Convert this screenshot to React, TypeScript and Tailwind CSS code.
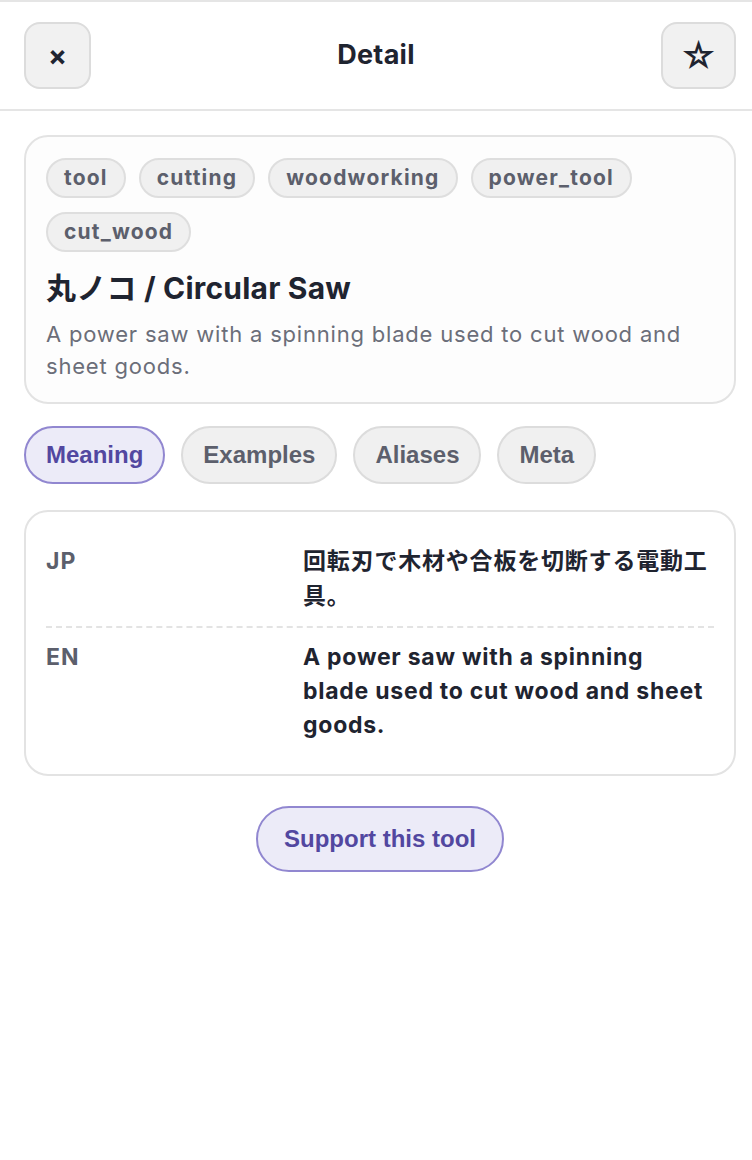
import React, { useState } from 'react';

const tags = ['tool', 'cutting', 'woodworking', 'power_tool', 'cut_wood'];
const tabs = ['Meaning', 'Examples', 'Aliases', 'Meta'];

const inter = "font-['Inter','Noto_Sans_CJK_JP',sans-serif]";
const arial = "font-['Liberation_Sans',Arial,sans-serif]";

export default function App() {
  const [tab, setTab] = useState('Meaning');

  return (
    <div className={`min-h-[1160px] bg-white ${inter} text-[#1f2430]`}>
      {/* Header */}
      <header className="flex items-center justify-between border-y-2 border-[#e5e5e5] pl-6 pr-4 py-5">
        <button className="flex h-[67px] w-[67px] items-center justify-center rounded-2xl border-2 border-[#dcdcdc] bg-[#f1f1f1] text-[28px] font-bold leading-none">
          ×
        </button>
        <h1 className="text-[27px] font-bold tracking-[0.3px]">Detail</h1>
        <button className="flex h-[67px] w-[75px] items-center justify-center rounded-2xl border-2 border-[#dcdcdc] bg-[#f1f1f1] text-[36px] leading-none">
          ☆
        </button>
      </header>

      <main className="flex flex-col pl-6 pr-4 pt-6">
        {/* Summary card */}
        <section className="rounded-3xl border-2 border-[#e3e3e3] bg-[#fdfdfd] px-5 pt-[21px] pb-5">
          <div className="flex flex-wrap gap-x-[13px] gap-y-[14px]">
            {tags.map((t) => (
              <span
                key={t}
                className="flex h-10 items-center rounded-full border-2 border-[#dedede] bg-[#f0f0f0] px-4 text-[21px] font-bold tracking-[1.2px] text-[#5c5f6c]"
              >
                {t}
              </span>
            ))}
          </div>
          <h2 className="mt-[18px] text-[30px] leading-9 font-bold tracking-[0.2px]">丸ノコ / Circular Saw</h2>
          <p className="mt-3 text-[22px] leading-8 tracking-[0.8px] text-[#6b6e79]">
            A power saw with a spinning blade used to cut wood and sheet goods.
          </p>
        </section>

        {/* Tabs */}
        <nav className={`mt-[22px] flex gap-4 ${arial}`}>
          {tabs.map((t) => {
            const active = t === tab;
            return (
              <button
                key={t}
                onClick={() => setTab(t)}
                className={
                  active
                    ? 'h-[58px] rounded-full border-2 border-[#9187d0] bg-[#ecebf8] px-5 text-[24px] font-bold text-[#5247a0]'
                    : 'h-[58px] rounded-full border-2 border-[#dcdcdc] bg-[#f0f0f0] px-5 text-[24px] font-bold text-[#5c5f6c]'
                }
              >
                {t}
              </button>
            );
          })}
        </nav>

        {/* Meaning card */}
        <section className="mt-[26px] rounded-3xl border-2 border-[#e3e3e3] bg-white p-5">
          <div className="grid grid-cols-[257px_1fr] border-b-2 border-dashed border-[#e3e3e3] py-3">
            <span className="text-[23px] leading-[35px] font-bold tracking-[1px] text-[#5c5f6c]">JP</span>
            <span className="pr-[6px] text-[23px] leading-[35px] font-bold tracking-[0.8px]">
              回転刃で木材や合板を切断する電動工具。
            </span>
          </div>
          <div className="grid grid-cols-[257px_1fr] py-3">
            <span className="text-[23px] leading-[34px] font-bold tracking-[1px] text-[#5c5f6c]">EN</span>
            <span className="pr-[6px] text-[23px] leading-[34px] font-bold tracking-[0.75px]">
              A power saw with a spinning blade used to cut wood and sheet goods.
            </span>
          </div>
        </section>

        <div className="mt-[30px] flex justify-center">
          <button
            className={`h-[66px] rounded-full border-2 border-[#9187d0] bg-[#ecebf8] px-[26px] text-[24px] font-bold text-[#5247a0] ${arial}`}
          >
            Support this tool
          </button>
        </div>
      </main>
    </div>
  );
}
